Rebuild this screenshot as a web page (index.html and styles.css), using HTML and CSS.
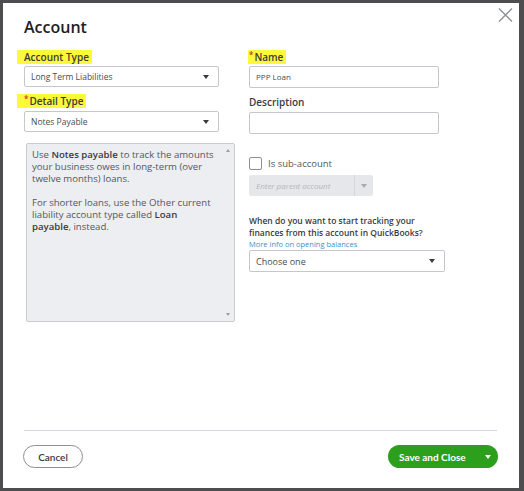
FILE: index.html
```html
<!DOCTYPE html>
<html lang="en">
<head>
    <meta charset="UTF-8">
    <title>Account</title>
    <link rel="stylesheet" href="styles.css">
</head>
<body>
    <div class="dialog">
        <button class="close-btn" aria-label="Close">
            <svg width="15" height="14" viewBox="0 0 15 14"><path d="M1 0.5 L14 13.5 M14 0.5 L1 13.5" stroke="#8d9096" stroke-width="1.4" fill="none"/></svg>
        </button>

        <h1 class="title">Account</h1>

        <div class="form">
            <div class="col-left">
                <label class="field-label hl">Account Type</label>
                <div class="select">
                    <span>Long Term Liabilities</span>
                    <span class="caret"></span>
                </div>

                <label class="field-label hl second"><span class="req">*</span>Detail Type</label>
                <div class="select">
                    <span>Notes Payable</span>
                    <span class="caret"></span>
                </div>

                <div class="detail-box">
                    <p>Use <b>Notes payable</b> to track the amounts your business owes in long-term (over twelve months) loans.</p>
                    <p>For shorter loans, use the Other current liability account type called <b>Loan</b><br><b>payable</b>, instead.</p>
                    <span class="scroll-up"></span>
                    <span class="scroll-down"></span>
                </div>
            </div>

            <div class="col-right">
                <label class="field-label hl hl-right"><span class="req">*</span>Name</label>
                <div class="input">PPP Loan</div>

                <label class="field-label second">Description</label>
                <div class="input"></div>

                <label class="check-row">
                    <span class="checkbox"></span>
                    <span>Is sub-account</span>
                </label>
                <div class="parent-select">
                    <span class="parent-text">Enter parent account</span>
                    <span class="parent-arrow"><span class="caret light"></span></span>
                </div>

                <p class="question">When do you want to start tracking your finances from this account in QuickBooks?</p>
                <a class="info-link" href="#">More info on opening balances</a>
                <div class="select wide">
                    <span>Choose one</span>
                    <span class="caret"></span>
                </div>
            </div>
        </div>

        <div class="footer">
            <button class="cancel-btn">Cancel</button>
            <button class="save-btn">Save and Close<span class="save-caret"></span></button>
        </div>
    </div>
</body>
</html>
```

FILE: styles.css
```css
body {
    margin: 0;
    padding: 3px 0 0 3px;
    background: #4d4d4f;
    font-family: 'Open Sans', sans-serif;
    color: #393a3d;
    overflow: hidden;
}

.dialog {
    position: relative;
    width: 516px;
    height: 485px;
    box-sizing: border-box;
    background: #fff;
    padding: 0 22px 0 21px;
    display: flex;
    flex-direction: column;
}

.close-btn {
    position: absolute;
    top: 5px;
    right: 6px;
    border: none;
    background: none;
    padding: 0;
    width: 15px;
    height: 14px;
}

.close-btn svg {
    display: block;
}

.title {
    margin: 0;
    padding-top: 14px;
    height: 33px;
    font-size: 16px;
    line-height: 20px;
    font-weight: 600;
    color: #1f2024;
}

.form {
    display: flex;
    gap: 14px;
}

.col-left {
    width: 211px;
    display: flex;
    flex-direction: column;
    align-items: flex-start;
}

.col-right {
    flex: 1;
    display: flex;
    flex-direction: column;
    align-items: flex-start;
}

.field-label {
    display: inline-block;
    height: 14px;
    line-height: 14px;
    font-size: 10px;
    font-weight: 600;
    color: #393a3d;
    margin-bottom: 2px;
}

.field-label.second {
    margin-top: 7px;
    margin-bottom: 3px;
}

.hl {
    background: #fbf93a;
    margin-left: -7px;
    padding: 0 3px 0 7px;
}

.hl-right {
    margin-left: -1px;
    padding: 0 3px 0 1px;
}

.req {
    font-size: 8px;
    vertical-align: top;
    line-height: 10px;
    color: #c9392a;
    margin-right: 1px;
}

.select {
    width: 195px;
    height: 21px;
    box-sizing: border-box;
    border: 1px solid #c4c7cc;
    border-radius: 2px;
    display: flex;
    align-items: center;
    justify-content: space-between;
    padding: 0 9px 0 6px;
    font-size: 8.5px;
    color: #4a4b4f;
    background: #fff;
}

.caret {
    width: 0;
    height: 0;
    border-left: 3px solid transparent;
    border-right: 3px solid transparent;
    border-top: 4px solid #393a3d;
}

.caret.light {
    border-top-color: #a7aab0;
}

.detail-box {
    position: relative;
    margin: 11px 0 0 2px;
    width: 209px;
    height: 179px;
    box-sizing: border-box;
    background: #eceef1;
    border: 1px solid #c9cbcf;
    border-radius: 2px;
    padding: 5px 15px 0 5px;
    font-size: 9.6px;
    line-height: 12px;
    color: #55575c;
}

.detail-box p {
    margin: 0 0 12px;
}

.detail-box b {
    font-weight: 600;
    color: #393a3d;
}

.scroll-up, .scroll-down {
    position: absolute;
    right: 4px;
    width: 0;
    height: 0;
    border-left: 2px solid transparent;
    border-right: 2px solid transparent;
}

.scroll-up {
    top: 5px;
    border-bottom: 3px solid #9a9da3;
}

.scroll-down {
    bottom: 5px;
    border-top: 3px solid #9a9da3;
}

.input {
    width: 190px;
    height: 22px;
    box-sizing: border-box;
    border: 1px solid #c4c7cc;
    border-radius: 2px;
    padding: 0 6px;
    font-size: 8px;
    line-height: 20px;
    color: #4a4b4f;
}

.check-row {
    display: flex;
    align-items: center;
    gap: 6px;
    margin-top: 23px;
    font-size: 9.5px;
    color: #55575c;
}

.checkbox {
    width: 13px;
    height: 13px;
    box-sizing: border-box;
    border: 1px solid #8d9096;
    border-radius: 2px;
}

.parent-select {
    margin-top: 5px;
    width: 124px;
    height: 21px;
    display: flex;
    background: #e6e7ea;
    border-radius: 2px;
}

.parent-text {
    width: 106px;
    padding-left: 7px;
    box-sizing: border-box;
    font-size: 8px;
    line-height: 21px;
    font-style: italic;
    color: #b4b6bb;
    border-right: 1px solid #d4d6da;
}

.parent-arrow {
    flex: 1;
    display: flex;
    align-items: center;
    justify-content: center;
}

.question {
    margin: 19px 0 0;
    width: 180px;
    font-size: 8.5px;
    line-height: 12px;
    font-weight: 600;
    color: #393a3d;
}

.info-link {
    margin-top: 0;
    font-size: 7.5px;
    line-height: 10px;
    color: #3f8fc7;
    text-decoration: none;
}

.select.wide {
    margin-top: 1px;
    width: 196px;
    height: 22px;
    font-size: 9px;
}

.footer {
    margin-top: auto;
    border-top: 1px solid #d4d7dc;
    padding: 14px 0 20px;
    display: flex;
    justify-content: space-between;
    align-items: center;
}

.cancel-btn {
    margin-left: -1px;
    width: 60px;
    height: 23px;
    border: 1px solid #8d9096;
    border-radius: 12px;
    background: #fff;
    font-family: 'Lato', sans-serif;
    font-size: 10px;
    font-weight: 600;
    color: #393a3d;
    padding: 0;
}

.save-btn {
    margin-right: -1px;
    width: 110px;
    height: 23px;
    border: none;
    border-radius: 12px;
    background: #2ca01c;
    color: #fff;
    font-family: 'Lato', sans-serif;
    font-size: 10px;
    font-weight: 700;
    display: flex;
    align-items: center;
    padding: 0 7px 0 11px;
    justify-content: space-between;
}

.save-caret {
    width: 0;
    height: 0;
    border-left: 3.5px solid transparent;
    border-right: 3.5px solid transparent;
    border-top: 4px solid #fff;
}
```
